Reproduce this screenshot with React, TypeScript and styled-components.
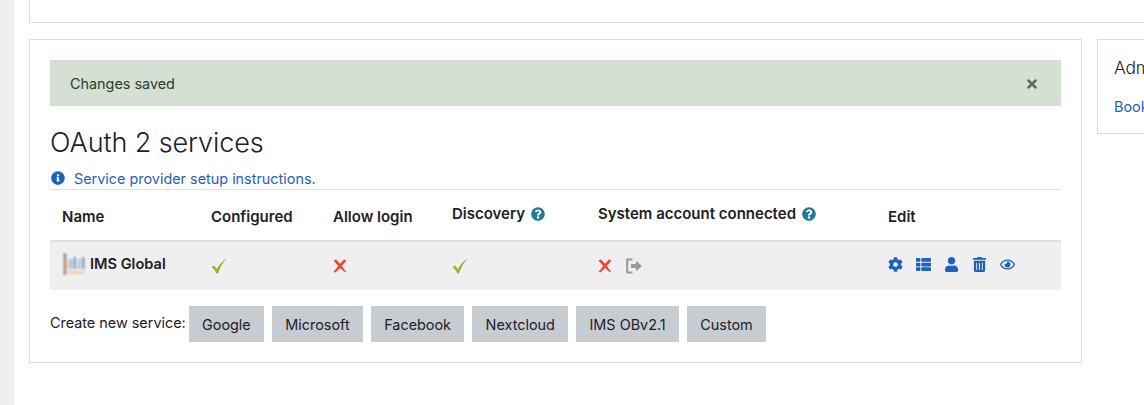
import * as React from 'react';
import styled, { createGlobalStyle } from 'styled-components';
import { FaCog, FaInfoCircle, FaQuestionCircle, FaRegEye, FaThList, FaTimes, FaTrashAlt, FaUser } from 'react-icons/fa';

const GlobalStyle = createGlobalStyle`
	html, body {
		margin: 0;
		padding: 0;
		background: #fff;
		overflow: hidden;
	}
	body {
		font-family: Inter, "Liberation Sans", sans-serif;
		font-size: 14.4px;
		color: #1d2125;
	}
`;

const Page = styled.div`
	display: flex;
	width: 1144px;
	height: 405px;
	overflow: hidden;
`;

const Gutter = styled.div`
	flex: 0 0 14px;
	background: #efefef;
`;

const Content = styled.div`
	flex: 1;
	min-width: 0;
	padding-left: 15px;
`;

const TopCard = styled.div`
	height: 22px;
	width: 1200px;
	border: 1px solid #dcdcdc;
	border-top: 0;
	margin-bottom: 16px;
`;

const Row = styled.div`
	display: flex;
	gap: 15px;
	align-items: flex-start;
`;

const MainCard = styled.section`
	flex: 0 0 1053px;
	box-sizing: border-box;
	height: 324px;
	padding: 20px;
	border: 1px solid #dcdcdc;
`;

const SideCard = styled.aside`
	flex: 0 0 200px;
	box-sizing: border-box;
	height: 95px;
	padding: 17px 16px;
	border: 1px solid #dcdcdc;
`;

const SideTitle = styled.div`
	font-size: 17.5px;
	font-weight: 300;
	letter-spacing: -0.3px;
	line-height: 22px;
	margin-bottom: 19px;
	color: #1d2125;
`;

const Link = styled.a`
	color: #1f62bd;
	text-decoration: none;
`;

const Alert = styled.div`
	display: flex;
	align-items: center;
	justify-content: space-between;
	box-sizing: border-box;
	height: 46px;
	padding: 0 22px 0 20px;
	background: #d5dfd3;
	color: #2b3f2b;
`;

const Close = styled.span`
	display: flex;
	color: #5f665f;
	font-size: 14px;
	margin-top: 2px;
`;

const Title = styled.h2`
	margin: 20px 0 0;
	font-size: 27px;
	line-height: 33px;
	font-weight: 300;
	color: #1d2125;
	letter-spacing: -0.1px;
`;

const Setup = styled.div`
	display: flex;
	align-items: center;
	gap: 9px;
	height: 30px;
	padding: 8px 0 0 1px;
	box-sizing: border-box;
`;

const InfoIcon = styled(FaInfoCircle)`
	color: #1f62bd;
	font-size: 14px;
`;

const Table = styled.table`
	width: 1011px;
	table-layout: fixed;
	border-collapse: collapse;
	border-top: 1px solid #dee2e6;
`;

const Head = styled.th`
	height: 51px;
	padding: 4px 12px 0;
	box-sizing: border-box;
	border-bottom: 2px solid #dee2e6;
	text-align: left;
	font-size: 15px;
	font-weight: 600;
	line-height: 20px;
	vertical-align: middle;
	white-space: nowrap;
`;

const HeadInner = styled.span`
	display: flex;
	align-items: center;
	gap: 6px;
	position: relative;
	top: -3px;
`;

const HelpIcon = styled(FaQuestionCircle)`
	color: #1f7a96;
	font-size: 14px;
`;

const Cell = styled.td`
	height: 49px;
	padding: 0 12px;
	box-sizing: border-box;
	background: #efefef;
	vertical-align: middle;
`;

const NameCell = styled.div`
	display: flex;
	align-items: center;
	gap: 4px;
	font-weight: 600;
	font-size: 14.6px;
	margin-top: -3px;
`;

const IconGroup = styled.div`
	display: flex;
	align-items: center;
	gap: 14px;
`;

const StatusIcon = styled.div`
	display: flex;
`;

const EditGroup = styled.div`
	display: flex;
	align-items: center;
	color: #1f62bd;
	font-size: 15px;
	gap: 13px;
	margin-top: -2px;
`;

const Create = styled.div`
	display: flex;
	align-items: flex-start;
	gap: 8px;
	margin-top: 16px;
`;

const CreateLabel = styled.span`
	line-height: 33px;
	margin-right: -5px;
`;

const ServiceButton = styled.button`
	height: 36px;
	padding: 2px 13.3px 0;
	border: 0;
	background: #c7ccd3;
	color: #1d2125;
	font: inherit;
`;

const Logo = () => (
	<svg width="24" height="24" viewBox="0 0 24 24">
		<defs>
			<filter id="b">
				<feGaussianBlur stdDeviation="1" />
			</filter>
		</defs>
		<rect width="24" height="24" fill="#f1f0ee" />
		<g filter="url(#b)">
			<rect x="1.5" y="1" width="3" height="22" fill="#8a97ad" />
			<rect x="2" y="8" width="2.5" height="9" fill="#e08a3c" />
			<rect x="7" y="7" width="3" height="10" fill="#a9bbd8" />
			<rect x="11.5" y="5" width="2.5" height="12" fill="#7e97c4" />
			<rect x="16" y="7" width="2.5" height="10" fill="#a9bbd8" />
			<rect x="20" y="5" width="2.5" height="12" fill="#7e97c4" />
			<rect x="6" y="19" width="17" height="3" fill="#f2cdb0" />
		</g>
	</svg>
);

const Check = () => (
	<svg width="16" height="16" viewBox="0 0 16 16">
		<path d="M0.5 9.2 L3 7.6 L6 11 C8 7 11 3.5 15.5 0.5 C12 4.5 9 9.5 7 15.5 L5.5 15.5 C4 12.5 2.5 10.8 0.5 9.2 Z" fill="#8fbc2f" />
	</svg>
);

const Cross = () => (
	<svg width="14" height="14" viewBox="0 0 14 14">
		<path d="M0.5 1.5 L3 0.5 L7 4.8 L11 0.5 L13.5 1.5 L8.8 7 L13.5 13.5 L11 12.5 L7 9 L2.5 13.5 L0.5 13 L5.2 7 Z" fill="#f0433a" />
	</svg>
);

const SignOut = () => (
	<svg width="16" height="16" viewBox="0 0 16 16">
		<path d="M6.5 1.5 H1.2 V14.5 H6.5" fill="none" stroke="#999" strokeWidth="2" />
		<path d="M5 6 H10 V2.8 L16 8 L10 13.2 V10 H5 Z" fill="#999" />
	</svg>
);

const App = () => (
	<Page>
		<GlobalStyle />
		<Gutter />
		<Content>
			<TopCard />
			<Row>
				<MainCard>
					<Alert>
						<span>Changes saved</span>
						<Close>
							<FaTimes />
						</Close>
					</Alert>
					<Title>OAuth 2 services</Title>
					<Setup>
						<InfoIcon />
						<Link href="#">Service provider setup instructions.</Link>
					</Setup>
					<Table>
						<colgroup>
							<col style={{ width: 149 }} />
							<col style={{ width: 122 }} />
							<col style={{ width: 119 }} />
							<col style={{ width: 146 }} />
							<col style={{ width: 290 }} />
							<col style={{ width: 185 }} />
						</colgroup>
						<thead>
							<tr>
								<Head>Name</Head>
								<Head>Configured</Head>
								<Head>Allow login</Head>
								<Head>
									<HeadInner>
										Discovery <HelpIcon />
									</HeadInner>
								</Head>
								<Head>
									<HeadInner>
										System account connected <HelpIcon />
									</HeadInner>
								</Head>
								<Head>Edit</Head>
							</tr>
						</thead>
						<tbody>
							<tr>
								<Cell>
									<NameCell>
										<Logo />
										IMS Global
									</NameCell>
								</Cell>
								<Cell>
									<StatusIcon>
										<Check />
									</StatusIcon>
								</Cell>
								<Cell>
									<StatusIcon>
										<Cross />
									</StatusIcon>
								</Cell>
								<Cell>
									<StatusIcon>
										<Check />
									</StatusIcon>
								</Cell>
								<Cell>
									<IconGroup>
										<Cross />
										<SignOut />
									</IconGroup>
								</Cell>
								<Cell>
									<EditGroup>
										<FaCog />
										<FaThList />
										<FaUser />
										<FaTrashAlt />
										<FaRegEye />
									</EditGroup>
								</Cell>
							</tr>
						</tbody>
					</Table>
					<Create>
						<CreateLabel>Create new service:</CreateLabel>
						<ServiceButton>Google</ServiceButton>
						<ServiceButton>Microsoft</ServiceButton>
						<ServiceButton>Facebook</ServiceButton>
						<ServiceButton>Nextcloud</ServiceButton>
						<ServiceButton>IMS OBv2.1</ServiceButton>
						<ServiceButton>Custom</ServiceButton>
					</Create>
				</MainCard>
				<SideCard>
					<SideTitle>Administration</SideTitle>
					<Link href="#">Bookmarks</Link>
				</SideCard>
			</Row>
		</Content>
	</Page>
);

export default App;
